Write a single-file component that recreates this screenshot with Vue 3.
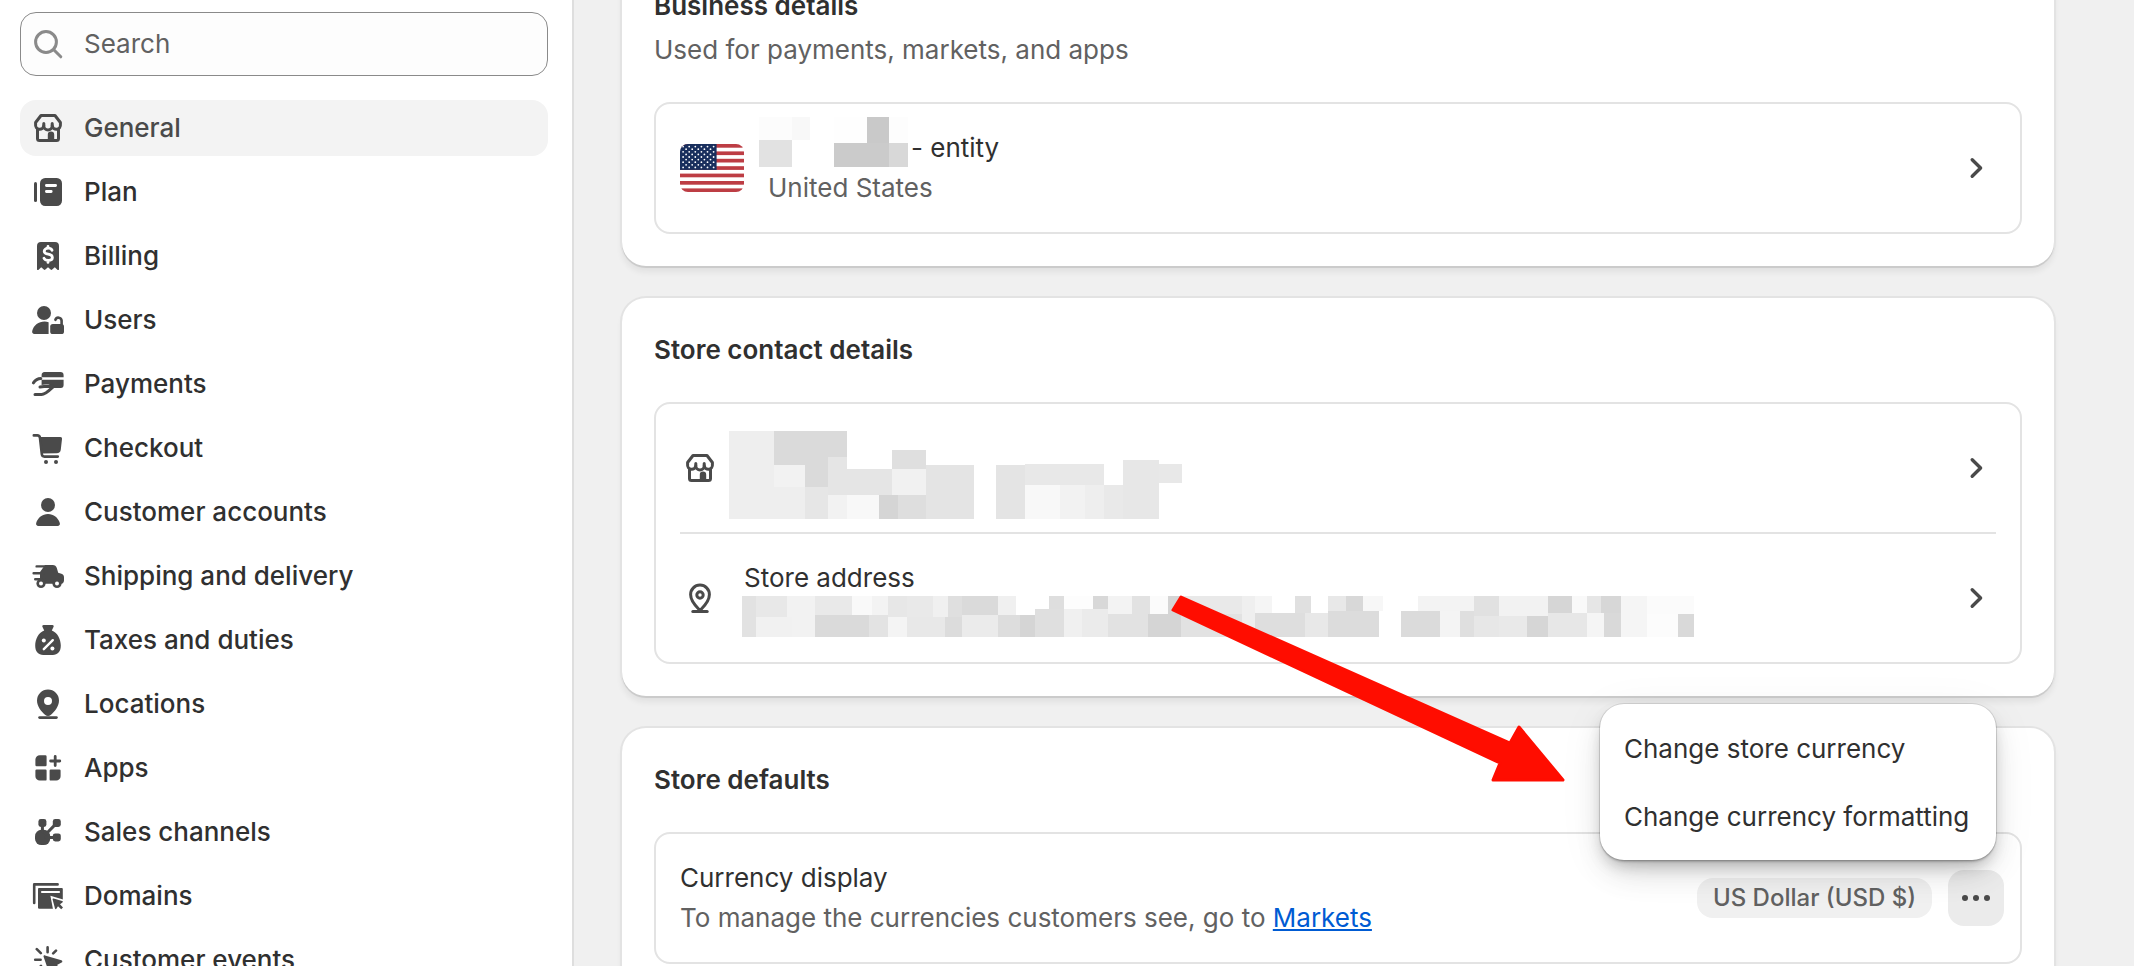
<template>
  <div class="settings">
    <aside class="sidebar">
      <div class="search">
        <label for="settings-search" aria-label="Search settings">
          <svg class="icon" viewBox="0 0 20 20">
            <circle cx="9" cy="9" r="5.2" class="line" />
            <path d="M13 13l3.4 3.4" class="line" />
          </svg>
        </label>
        <input id="settings-search" v-model="query" type="text" placeholder="Search" />
      </div>
      <nav>
        <a v-for="item in items" :key="item.name" href="#" :class="{ active: item.name === current }" @click.prevent="current = item.name">
          <svg class="icon" viewBox="0 0 20 20" v-html="icons[item.icon]"></svg>
          <span>{{ item.name }}</span>
        </a>
      </nav>
    </aside>

    <main>
      <section class="card">
        <h2>Business details</h2>
        <p class="subdued intro">Used for payments, markets, and apps</p>
        <div class="box">
          <a href="#" class="row">
            <svg class="flag" viewBox="0 0 64 48">
              <rect width="64" height="48" fill="#fff" />
              <rect v-for="n in 7" :key="n" :y="(n - 1) * 7.4" width="64" height="3.7" fill="#bd3d44" />
              <rect width="36.6" height="25.9" fill="#192f5d" />
              <circle v-for="(s, i) in stars" :key="'s' + i" :cx="s[0]" :cy="s[1]" r="0.9" fill="#fff" />
            </svg>
            <span class="text">
              <span class="entity">
                <svg class="mask mask-name" viewBox="0 0 149 50" width="149" height="50">
                  <rect v-for="(b, i) in nameBlocks" :key="i" :x="b[0]" :y="b[1]" :width="b[2]" :height="b[3]" :fill="'#' + b[4]" />
                </svg>
                - entity
              </span>
              <span class="subdued">United States</span>
            </span>
            <svg class="icon" viewBox="0 0 20 20" v-html="icons.chevron"></svg>
          </a>
        </div>
      </section>

      <section class="card">
        <h2>Store contact details</h2>
        <div class="box">
          <a href="#" class="row" aria-label="Store name">
            <svg class="icon" viewBox="0 0 20 20" v-html="icons.store"></svg>
            <span class="text tall">
              <svg class="mask mask-store" viewBox="0 0 453 88" width="453" height="88">
                <rect v-for="(b, i) in storeBlocks" :key="i" :x="b[0]" :y="b[1]" :width="b[2]" :height="b[3]" :fill="'#' + b[4]" />
              </svg>
            </span>
            <svg class="icon" viewBox="0 0 20 20" v-html="icons.chevron"></svg>
          </a>
          <hr />
          <a href="#" class="row">
            <svg class="icon" viewBox="0 0 20 20" v-html="icons.pin"></svg>
            <span class="text tall">
              <span>Store address</span>
              <svg class="mask mask-address" viewBox="0 0 952 41" width="952" height="41">
                <rect v-for="(b, i) in addressBlocks" :key="i" :x="b[0]" :y="b[1]" :width="b[2]" :height="b[3]" :fill="'#' + b[4]" />
              </svg>
            </span>
            <svg class="icon" viewBox="0 0 20 20" v-html="icons.chevron"></svg>
          </a>
        </div>
      </section>

      <section class="card">
        <h2>Store defaults</h2>
        <div class="box">
          <div class="row">
            <div class="text">
              <span>Currency display</span>
              <span class="subdued">To manage the currencies customers see, go to <a href="#" class="link">Markets</a></span>
            </div>
            <div class="actions">
              <span class="badge">US Dollar (USD $)</span>
              <div class="more">
                <button type="button" aria-label="More actions" @click="menuOpen = !menuOpen">
                  <svg class="icon" viewBox="0 0 20 20" v-html="icons.dots"></svg>
                </button>
                <div v-show="menuOpen" class="menu">
                  <button type="button">Change store currency</button>
                  <button type="button">Change currency formatting</button>
                </div>
              </div>
            </div>
          </div>
        </div>
      </section>
    </main>

    <svg class="arrow" viewBox="0 0 396 188" width="396" height="188">
      <path d="M11 3L340 149L349 133L393 186H323L330 169L3 16Z" />
    </svg>
  </div>
</template>

<script setup>
import { ref } from 'vue'

const query = ref('')
const current = ref('General')
const menuOpen = ref(true)

const items = [
  { name: 'General', icon: 'store' },
  { name: 'Plan', icon: 'plan' },
  { name: 'Billing', icon: 'billing' },
  { name: 'Users', icon: 'users' },
  { name: 'Payments', icon: 'payments' },
  { name: 'Checkout', icon: 'cart' },
  { name: 'Customer accounts', icon: 'person' },
  { name: 'Shipping and delivery', icon: 'truck' },
  { name: 'Taxes and duties', icon: 'tax' },
  { name: 'Locations', icon: 'location' },
  { name: 'Apps', icon: 'apps' },
  { name: 'Sales channels', icon: 'channels' },
  { name: 'Domains', icon: 'domains' },
  { name: 'Customer events', icon: 'events' }
]

// 20x20 glyphs: g.l is stroked, g.w is knocked out
const icons = {
  store: '<g class="l"><path d="M6.5 3.75h7l2.7 3.5v1a2 2 0 0 1-4.1.6 2.1 2.1 0 0 1-4.2 0 2 2 0 0 1-4.1-.6v-1z"/><path d="M7.9 8.8V7.7M12.1 8.8V7.700M4.750 10.500v4.750a1 1 0 0 0 1 1h8.500a1 1 0 0 0 1-1V10.500"/></g><path d="M9.900 16.400v-3a1.600 1.600 0 0 1 3.200 0v3z"/>',
  plan: '<rect x="3" y="5" width="1.5" height="10" rx=".75"/><rect x="6" y="3" width="11" height="14" rx="2.6"/><g class="w"><path d="M9.2 6.75h4.6M9.2 9.75h2.4"/></g>',
  billing: '<path d="M6.5 3h7a2 2 0 0 1 2 2v11.6c0 .4-.5.6-.8.3L13.4 15.6l-1.3 1.2a.6.6 0 0 1-.8 0L10 15.6l-1.3 1.2a.6.6 0 0 1-.8 0L6.6 15.6l-1.3 1.3c-.3.3-.8.1-.8-.3V5a2 2 0 0 1 2-2z"/><g class="w"><path d="M12 7.1c-.3-.6-1-1-1.9-1-1.1 0-2 .6-2 1.5s.8 1.3 2 1.5 2.1.6 2.1 1.6-1 1.5-2.1 1.5c-1 0-1.8-.4-2.1-1.1M10 5.2v.8M10 12.3v.9"/></g>',
  users: '<circle cx="8" cy="6.5" r="3.5"/><path d="M10.3 17H3.2c-.8 0-1.3-.7-1.1-1.5C2.8 12.7 5.3 10.8 8.3 10.8c.7 0 1.4.1 2 .3z"/><rect x="11.1" y="12" width="6.9" height="5" rx="1.3"/><g class="l"><path d="M13.7 9.9a1.6 1.6 0 0 1 3.1.4v2" stroke-width="1.3"/></g>',
  payments: '<path d="M8.3 4h7.9a1.6 1.6 0 0 1 1.6 1.6v1H6.8v-1A1.6 1.6 0 0 1 8.3 4zM6.8 7.9h11v2.6a1.5 1.5 0 0 1-1.6 1.5H6.8z"/><g class="w"><path d="M6.800 10.900l3.600-.6" stroke-width=".7"/></g><g class="l"><path d="M2.700 9.400c.9-1.300 1.800-2.200 3.700-2.200M6 11.500l6-.8M3.500 15.200h3.300c1.900 0 3.600-1.800 5.700-3.800"/></g>',
  cart: '<path d="M5.600 4.500h10.600c.6 0 .9.4.8 1l-.6 5.200a2.100 2.100 0 0 1-2.100 1.900l-7.500.2z"/><g class="l"><path d="M2.900 3.700h1.700c.8 0 1.300.5 1.400 1.300l.9 8.100c.1.800.6 1.200 1.300 1.200h6.700" stroke-width="1.300"/></g><circle cx="9" cy="17" r="1"/><circle cx="14" cy="17" r="1"/>',
  person: '<circle cx="10" cy="6.5" r="3.5"/><path d="M5.2 17c-.8 0-1.4-.7-1.1-1.5C4.9 12.9 7.2 11 10 11s5.1 1.9 5.9 4.5c.3.8-.3 1.500-1.100 1.500z"/>',
  truck: '<path d="M8.5 4.5h3.9c1 0 1.7.6 2 1.5l.7 2.4 1.6.5c.8.3 1.3.9 1.3 1.7v1.6c0 1-.7 1.7-1.7 1.7H6V8z"/><g class="l"><path d="M4.3 5.2h7M2.8 8.6h5M3.6 11.6h5" stroke-width="1.2"/></g><circle cx="6.500" cy="13.700" r="2.300"/><circle cx="14.500" cy="13.700" r="2.300"/><circle cx="6.500" cy="13.700" r="1" fill="#fff"/><circle cx="14.500" cy="13.700" r="1" fill="#fff"/>',
  tax: '<path d="M7.8 2.5h4.400c.5 0 .8.5.6.9L11.900 5.200c2.700.9 4.500 4.200 4.500 7.600 0 3.200-1.600 4.700-4 4.700H7.600c-2.400 0-4-1.500-4-4.700 0-3.400 1.800-6.700 4.500-7.600L7.200 3.400c-.2-.4.1-.9.6-.9z"/><g class="w"><path d="M7.900 14.600l4.500-4.500" stroke-width="1.200"/></g><circle cx="7.900" cy="10.200" r="1" fill="#fff"/><circle cx="12.200" cy="14.300" r="1" fill="#fff"/>',
  location: '<path fill-rule="evenodd" d="M10 2.8a5.5 5.5 0 0 1 5.5 5.5c0 3-2.2 5.6-4 7.1a2.3 2.3 0 0 1-3 0c-1.8-1.5-4-4.1-4-7.1A5.5 5.5 0 0 1 10 2.8zm0 3.7a2 2 0 1 0 0 4 2 2 0 0 0 0-4z"/><rect x="5.1" y="16.1" width="9.800" height="1.400" rx=".7"/>',
  apps: '<path d="M5.9 3.6H8.7a.6.6 0 0 1 .6.6v4.3a.6.6 0 0 1-.6.6H4.3a.6.6 0 0 1-.6-.6V5.8a2.2 2.2 0 0 1 2.2-2.2zM4.3 10.7h4.4a.6.6 0 0 1 .6.6v4.4a.6.6 0 0 1-.6.6H5.9a2.2 2.2 0 0 1-2.2-2.2v-2.8a.6.6 0 0 1 .6-.6zM11.4 10.7h4.3a.6.6 0 0 1 .6.6v2.8a2.2 2.2 0 0 1-2.2 2.2h-2.700a.6.6 0 0 1-.6-.6v-4.400a.6.6 0 0 1 .6-.6z"/><g class="l"><path d="M13.600 4.200v4.600M11.300 6.500h4.600" stroke-width="1.400"/></g>',
  channels: '<rect x="5.2" y="3.5" width="4" height="4" rx="1.2"/><rect x="12.4" y="3.5" width="4" height="4" rx="1.2"/><rect x="12.4" y="10.7" width="4" height="4" rx="1.2"/><rect x="3.5" y="8.9" width="7.6" height="7.6" rx="3.2"/><g class="l"><path d="M7.2 6v4M14.2 5.7L9 11M9 12.7h5"/></g>',
  domains: '<g class="l"><path d="M3.1 13.5V4.2h11.7" stroke-width="1.3"/></g><path d="M5.6 6h11.2c.4 0 .6.2.6.6v9.8H5.6a.6.6 0 0 1-.6-.6V6.6c0-.4.2-.6.6-.6z"/><g class="w"><path d="M7 8h8.5" stroke-width="1.1"/></g><path d="M11.2 9.9l8 2.3-1 7H13z" fill="#fff"/><path d="M12.8 11.3l4.3 1.2c.4.1.4.5.1.7l-1.2.9 1.5 1.6-.9.9-1.6-1.5-.8 1.3c-.2.3-.6.3-.7-.1l-1.2-4.5c-.1-.3.2-.6.5-.5z"/>',
  events: '<path d="M8.5 7.7l8.2 2.4c.6.2.6.9.1 1.2l-2.3 1.2 2.5 2.6-1.4 1.4-2.6-2.5-1.3 2.3c-.3.5-1 .4-1.2-.1L7.8 8.4c-.2-.4.2-.9.7-.7z"/><g class="l"><path d="M9.8 3.7v2.4M4.4 4.6l2 2M14 5.3l-1.4 1.4M3.6 9.9h2.7M6.5 13l-1.5 1.5" stroke-width="1.3"/></g>',
  pin: '<g class="l"><path d="M10 3.55a4.7 4.7 0 0 1 4.7 4.75c0 2.7-1.9 5.1-4 7.2-.4.4-1 .4-1.4 0-2.1-2.1-4-4.5-4-7.2A4.7 4.7 0 0 1 10 3.55z"/><circle cx="10" cy="8.5" r="1.6"/><path d="M6.4 16.75h7.2"/></g>',
  chevron: '<g class="l"><path d="M8.1 5.9l4.2 4.1-4.2 4.1" stroke-width="1.7"/></g>',
  dots: '<circle cx="4.5" cy="10" r="1.5"/><circle cx="10" cy="10" r="1.5"/><circle cx="15.5" cy="10" r="1.5"/>'
}

const stars = []
for (let r = 0; r < 9; r++) {
  for (let c = 0; c < (r % 2 ? 5 : 6); c++) {
    stars.push([(r % 2 ? 6.1 : 3.1) + c * 6.1, 2.6 + r * 2.6])
  }
}

// x, y, width, height, colour
const nameBlocks = [
  [0, 0, 33, 23, 'fcfcfc'], [33, 0, 18, 23, 'f8f8f8'], [0, 23, 33, 27, 'e2e2e2'],
  [75, 0, 33, 26, 'fefefe'], [108, 0, 22, 26, 'c9c9c9'], [130, 0, 19, 26, 'fdfdfd'],
  [75, 26, 55, 24, 'cbcbcb'], [130, 26, 19, 24, 'd8d8d8']
]
const storeBlocks = [
  [0, 0, 45, 88, 'eeeeee'], [45, 0, 73, 26, 'dadada'], [45, 26, 54, 8, 'dadada'],
  [45, 34, 31, 22, 'f2f2f2'], [76, 34, 23, 22, 'dadada'], [45, 56, 31, 32, 'eeeeee'],
  [76, 56, 23, 32, 'e6e6e6'], [99, 26, 19, 38, 'e5e5e5'], [118, 38, 45, 26, 'e5e5e5'],
  [163, 19, 34, 19, 'dfdfdf'], [163, 38, 34, 26, 'f1f1f1'], [197, 34, 48, 54, 'e4e4e4'],
  [99, 64, 19, 24, 'f2f2f2'], [118, 64, 32, 24, 'f8f8f8'], [150, 64, 19, 24, 'd5d5d5'],
  [169, 64, 28, 24, 'dedede'], [267, 34, 29, 54, 'e4e4e4'], [296, 33, 79, 21, 'e8e8e8'],
  [296, 54, 35, 34, 'f8f8f8'], [331, 54, 25, 34, 'f2f2f2'], [356, 54, 19, 34, 'eeeeee'],
  [375, 54, 19, 34, 'e9e9e9'], [394, 29, 36, 59, 'e7e7e7'], [430, 33, 23, 19, 'e8e8e8']
]
const addressBlocks = [
  [0, 0, 14, 41, 'e2e2e2'], [14, 0, 31, 21, 'e8e8e8'], [45, 0, 28, 21, 'f2f2f2'],
  [73, 0, 37, 19, 'e9e9e9'], [110, 0, 20, 19, 'f9f9f9'], [130, 0, 16, 19, 'f3f3f3'],
  [146, 0, 19, 21, 'e7e7e7'], [165, 0, 26, 21, 'e9e9e9'], [191, 0, 15, 21, 'f0f0f0'],
  [206, 0, 14, 21, 'dfdfdf'], [220, 0, 36, 19, 'dadada'], [256, 0, 18, 19, 'f0f0f0'],
  [307, 0, 15, 13, 'dedede'], [322, 0, 29, 13, 'fdfdfd'], [351, 0, 15, 13, 'd8d8d8'],
  [366, 0, 24, 18, 'f3f3f3'], [390, 0, 18, 18, 'e2e2e2'], [408, 0, 18, 18, 'fbfbfb'],
  [426, 0, 13, 18, 'd5d5d5'], [439, 0, 61, 18, 'e9e9e9'], [500, 0, 13, 41, 'efefef'],
  [513, 0, 17, 17, 'f5f5f5'], [553, 0, 16, 17, 'e0e0e0'], [586, 0, 18, 15, 'e8e8e8'],
  [604, 0, 17, 15, 'd8d8d8'], [621, 0, 20, 15, 'f7f7f7'], [14, 21, 36, 20, 'f1f1f1'],
  [50, 21, 23, 20, 'f2f2f2'], [73, 19, 54, 22, 'dadada'], [127, 19, 19, 22, 'e3e3e3'],
  [146, 21, 19, 20, 'f4f4f4'], [165, 21, 38, 20, 'e8e8e8'], [203, 21, 17, 20, 'dcdcdc'],
  [220, 19, 36, 22, 'ebebeb'], [256, 19, 22, 22, 'dddddd'], [278, 19, 15, 22, 'd5d5d5'],
  [293, 13, 29, 28, 'dfdfdf'], [322, 13, 18, 28, 'f0f0f0'], [340, 13, 26, 28, 'ebebeb'],
  [366, 18, 40, 23, 'e2e2e2'], [406, 18, 33, 23, 'd5d5d5'], [439, 18, 61, 23, 'e2e2e2'],
  [513, 17, 50, 24, 'dedede'], [563, 17, 23, 24, 'e8e8e8'], [586, 15, 51, 26, 'dcdcdc'],
  [676, 0, 56, 15, 'f3f3f3'], [732, 0, 25, 20, 'e1e1e1'], [757, 0, 49, 20, 'f2f2f2'],
  [806, 0, 24, 17, 'd6d6d6'], [830, 0, 15, 17, 'f9f9f9'], [845, 0, 14, 17, 'e6e6e6'],
  [859, 0, 20, 17, 'd7d7d7'], [879, 0, 26, 41, 'f5f5f5'], [905, 0, 47, 18, 'fbfbfb'],
  [659, 15, 39, 26, 'dbdbdb'], [698, 15, 20, 26, 'f4f4f4'], [718, 15, 14, 26, 'dfdfdf'],
  [732, 20, 25, 21, 'e7e7e7'], [757, 20, 28, 21, 'e9e9e9'], [785, 20, 21, 21, 'd6d6d6'],
  [806, 17, 39, 24, 'e7e7e7'], [845, 17, 17, 24, 'f5f5f5'], [862, 17, 17, 24, 'd9d9d9'],
  [905, 18, 31, 23, 'fcfcfc'], [936, 18, 16, 23, 'd9d9d9']
]
</script>

<style>
body {
  background: #f0f0f0;
}
</style>

<style scoped>
.settings {
  position: relative;
  display: flex;
  height: 100vh;
  overflow: hidden;
  font-family: Inter, "Liberation Sans", sans-serif;
  font-size: 26px;
  line-height: 40px;
  color: #303030;
  background: #f0f0f0;
}
.settings * {
  box-sizing: border-box;
}
a {
  color: inherit;
  text-decoration: none;
}
button {
  border: 0;
  font: inherit;
  color: inherit;
  cursor: pointer;
}
.icon {
  flex: none;
  width: 40px;
  height: 40px;
  fill: #4a4a4a;
}
.icon :deep(.l),
.icon .line {
  fill: none;
  stroke: #4a4a4a;
  stroke-width: 1.5;
  stroke-linecap: round;
  stroke-linejoin: round;
}
.icon :deep(.w) {
  fill: none;
  stroke: #fff;
  stroke-width: 1.4;
  stroke-linecap: round;
  stroke-linejoin: round;
}

.sidebar {
  flex: none;
  width: 574px;
  padding: 12px 24px 0 20px;
  border-right: 2px solid #dedede;
  background: #fff;
}
.search {
  display: flex;
  align-items: center;
  gap: 16px;
  height: 64px;
  padding: 0 7px;
  border: 1px solid #8a8a8a;
  border-radius: 16px;
  background: #fdfdfd;
}
.search label {
  display: flex;
}
.search .icon .line {
  stroke: #8a8a8a;
}
.search input {
  flex: 1;
  min-width: 0;
  padding: 0;
  border: 0;
  outline: 0;
  background: none;
  font: inherit;
  color: #303030;
}
.search input::placeholder {
  color: #616161;
  opacity: 1;
}
nav {
  display: flex;
  flex-direction: column;
  gap: 8px;
  margin-top: 24px;
}
nav a {
  display: flex;
  align-items: center;
  gap: 16px;
  height: 56px;
  padding: 0 8px;
  border-radius: 16px;
  font-weight: 550;
}
nav a.active {
  background: #f3f3f3;
  color: #4a4a4a;
}

/* scrolled down so the first heading sits on the top edge */
main {
  flex: 1;
  min-width: 0;
  display: flex;
  flex-direction: column;
  gap: 32px;
  margin-top: -46px;
  padding: 0 80px 0 48px;
}
.card {
  flex: none;
  padding: 32px;
  border-radius: 24px;
  background: #fff;
  box-shadow: 0 2px 0 #cbcbcb, 0 0 0 2px #e3e3e3, 0 6px 6px rgba(26, 26, 26, 0.07);
}
h2 {
  margin: 0;
  font-size: 26px;
  line-height: 40px;
  font-weight: 600;
}
.intro {
  margin: 4px 0 0;
}
.subdued {
  color: #616161;
}
.box {
  margin-top: 32px;
  border: 2px solid #e3e3e3;
  border-radius: 16px;
}
.box hr {
  height: 2px;
  margin: 0 24px;
  border: 0;
  background: #e3e3e3;
}
.row {
  display: flex;
  align-items: center;
  gap: 24px;
  padding: 24px;
}
.text {
  position: relative;
  flex: 1;
  display: flex;
  flex-direction: column;
}
.tall {
  height: 80px;
}
.flag {
  width: 64px;
  height: 48px;
  border-radius: 8px;
}
.entity {
  padding-left: 143px;
}
.mask {
  position: absolute;
  shape-rendering: crispEdges;
}
.mask-name {
  left: -9px;
  top: -11px;
}
.mask-store {
  left: -15px;
  top: 3px;
}
.mask-address {
  left: -2px;
  top: 38px;
}
.link {
  color: #005bd3;
  text-decoration: underline;
}
.actions {
  display: flex;
  align-items: center;
  gap: 16px;
  margin-right: -8px;
}
.badge {
  padding: 0 16px;
  border-radius: 16px;
  background: #f0f0f0;
  color: #616161;
  font-size: 24px;
  font-weight: 550;
}
.more {
  position: relative;
}
.more > button {
  display: block;
  width: 56px;
  height: 56px;
  padding: 8px;
  border-radius: 16px;
  background: #ebebeb;
}
.menu {
  position: absolute;
  right: 8px;
  bottom: 66px;
  display: flex;
  flex-direction: column;
  gap: 4px;
  min-width: 396px;
  padding: 12px;
  border-radius: 24px;
  background: #fff;
  box-shadow: 0 0 0 1px rgba(0, 0, 0, 0.1), 0 2px 2px rgba(0, 0, 0, 0.18), 0 8px 16px -4px rgba(0, 0, 0, 0.22), 0 16px 32px -8px rgba(0, 0, 0, 0.16), 0 8px 48px rgba(0, 0, 0, 0.06);
}
.menu button {
  height: 64px;
  padding: 2px 12px 0;
  border-radius: 16px;
  background: none;
  text-align: left;
  white-space: nowrap;
}
.arrow {
  position: absolute;
  left: 1170px;
  top: 594px;
  fill: #ff0d00;
  stroke: #ff0d00;
  stroke-width: 3;
  stroke-linejoin: round;
  pointer-events: none;
}
</style>
